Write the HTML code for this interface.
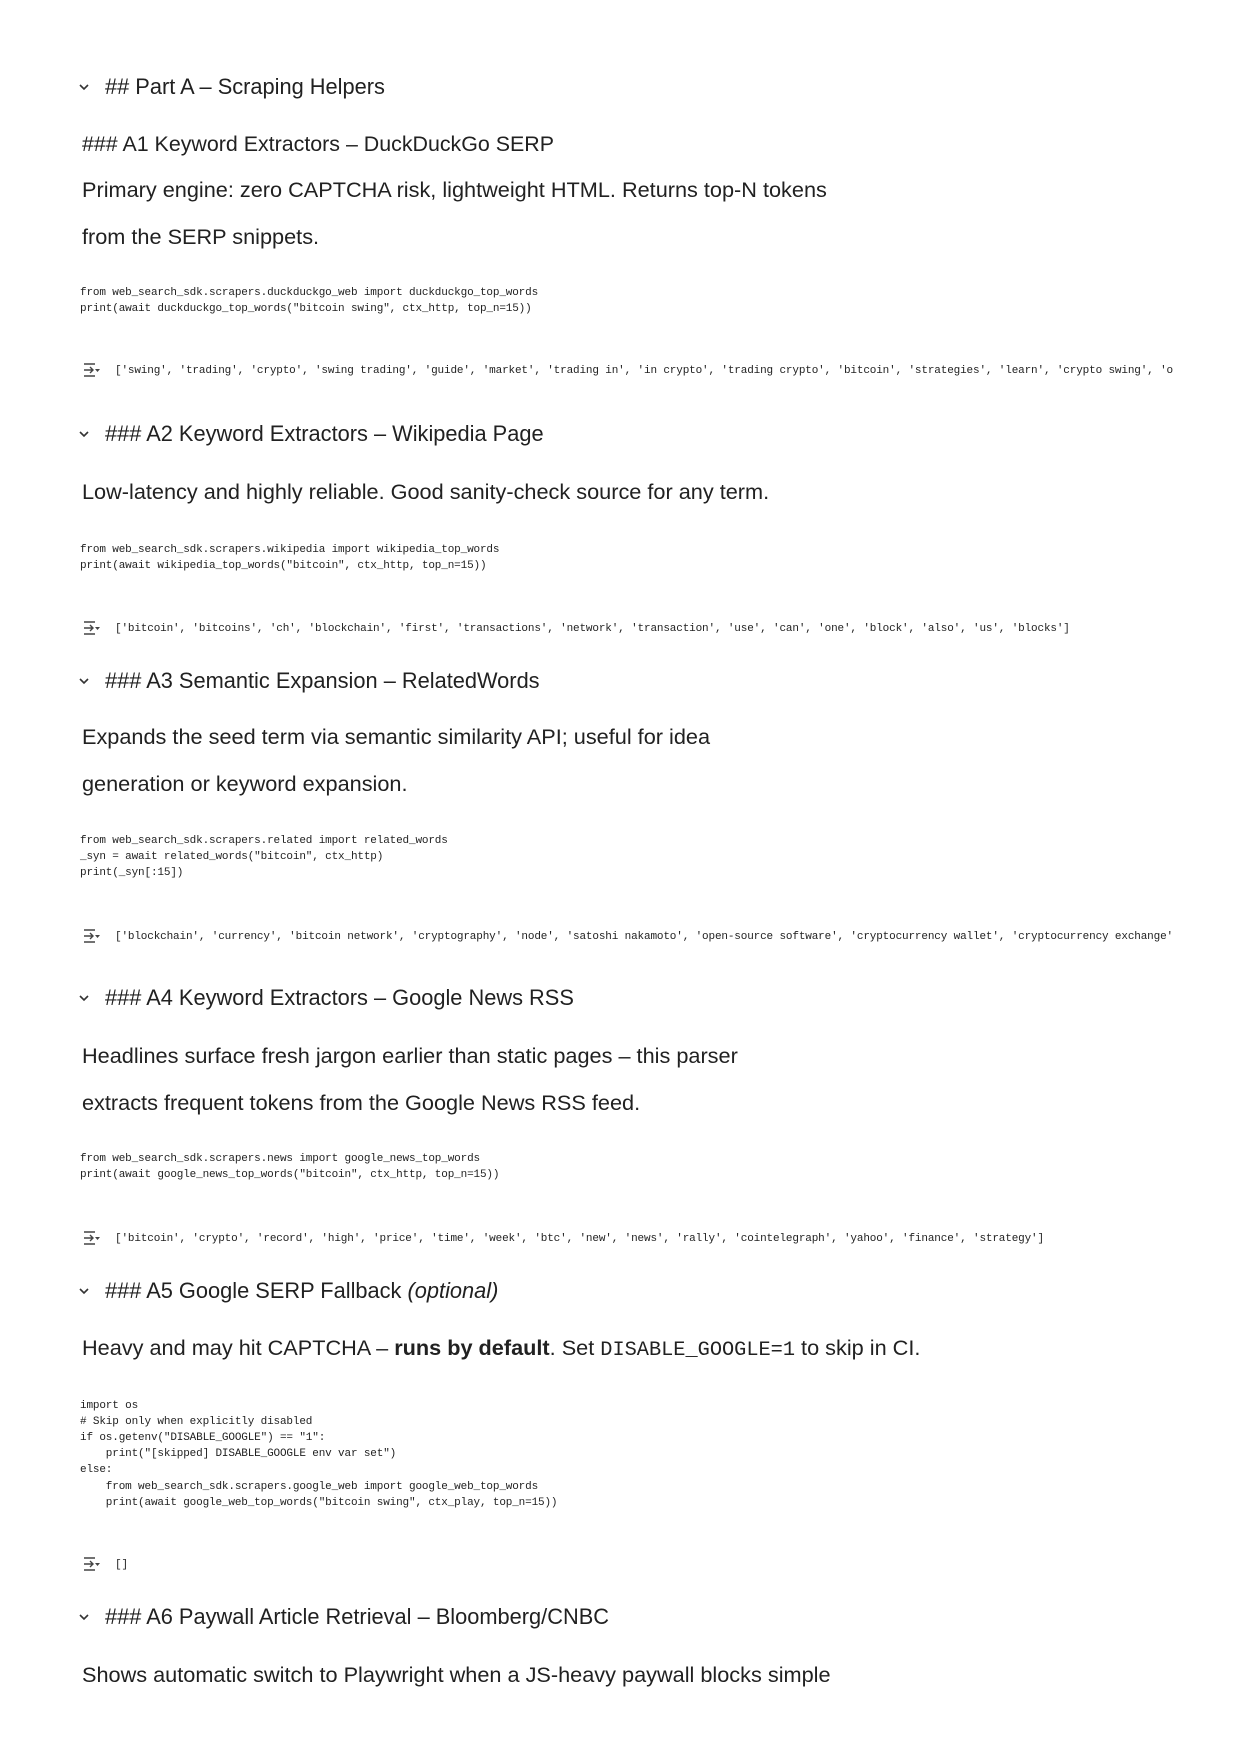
<!DOCTYPE html>
<html><head><meta charset="utf-8"><style>
body{margin:0;width:1241px;height:1755px;background:#fff;position:relative;overflow:hidden;color:#212121;font-family:"Liberation Sans",sans-serif}
.t{position:absolute;white-space:nowrap;line-height:30px;font-size:21.7px;left:82px}
.h{left:105px;font-size:21.8px}
.c{position:absolute;left:80px;font-family:"Liberation Mono",monospace;font-size:11px;letter-spacing:-0.15px;line-height:16.2px;white-space:pre;color:#222;margin-top:2px}
.o{position:absolute;left:115px;width:1067px;overflow:hidden;font-family:"Liberation Mono",monospace;font-size:11px;letter-spacing:-0.15px;line-height:16px;white-space:pre;color:#222;margin-top:2px}
.chev{position:absolute;left:78px;width:12px;height:8px}
.ic{position:absolute;left:83px;width:18px;height:14px;margin-top:1px}
code{font-family:"Liberation Mono",monospace;font-size:20.3px;letter-spacing:0}
</style></head><body>
<svg class="chev" style="top:82.5px" viewBox="0 0 12 8"><path d="M2 2l4 4 4-4" fill="none" stroke="#333" stroke-width="1.6"/></svg>
<div class="t h" style="top:71.5px">## Part A – Scraping Helpers</div>
<div class="t" style="top:128.5px;font-size:21.4px">### A1 Keyword Extractors – DuckDuckGo SERP</div>
<div class="t" style="top:175px">Primary engine: zero CAPTCHA risk, lightweight HTML. Returns top-N tokens</div>
<div class="t" style="top:221.5px">from the SERP snippets.</div>
<div class="c" style="top:283px">from web_search_sdk.scrapers.duckduckgo_web import duckduckgo_top_words
print(await duckduckgo_top_words("bitcoin swing", ctx_http, top_n=15))</div>
<svg class="ic" style="top:361.5px" viewBox="0 0 18 14"><path d="M1 1h11M1 13h11M1 7h9M7 4l3 3-3 3" fill="none" stroke="#444" stroke-width="1.4"/><path d="M12 6h5l-2.5 3z" fill="#444"/></svg>
<div class="o" style="top:360.5px">['swing', 'trading', 'crypto', 'swing trading', 'guide', 'market', 'trading in', 'in crypto', 'trading crypto', 'bitcoin', 'strategies', 'learn', 'crypto swing', 'o</div>

<svg class="chev" style="top:430px" viewBox="0 0 12 8"><path d="M2 2l4 4 4-4" fill="none" stroke="#333" stroke-width="1.6"/></svg>
<div class="t h" style="top:419px">### A2 Keyword Extractors – Wikipedia Page</div>
<div class="t" style="top:477px">Low-latency and highly reliable. Good sanity-check source for any term.</div>
<div class="c" style="top:540px">from web_search_sdk.scrapers.wikipedia import wikipedia_top_words
print(await wikipedia_top_words("bitcoin", ctx_http, top_n=15))</div>
<svg class="ic" style="top:620px" viewBox="0 0 18 14"><path d="M1 1h11M1 13h11M1 7h9M7 4l3 3-3 3" fill="none" stroke="#444" stroke-width="1.4"/><path d="M12 6h5l-2.5 3z" fill="#444"/></svg>
<div class="o" style="top:619px">['bitcoin', 'bitcoins', 'ch', 'blockchain', 'first', 'transactions', 'network', 'transaction', 'use', 'can', 'one', 'block', 'also', 'us', 'blocks']</div>

<svg class="chev" style="top:676.5px" viewBox="0 0 12 8"><path d="M2 2l4 4 4-4" fill="none" stroke="#333" stroke-width="1.6"/></svg>
<div class="t h" style="top:665.5px">### A3 Semantic Expansion – RelatedWords</div>
<div class="t" style="top:722px">Expands the seed term via semantic similarity API; useful for idea</div>
<div class="t" style="top:769px">generation or keyword expansion.</div>
<div class="c" style="top:831px">from web_search_sdk.scrapers.related import related_words
_syn = await related_words("bitcoin", ctx_http)
print(_syn[:15])</div>
<svg class="ic" style="top:928px" viewBox="0 0 18 14"><path d="M1 1h11M1 13h11M1 7h9M7 4l3 3-3 3" fill="none" stroke="#444" stroke-width="1.4"/><path d="M12 6h5l-2.5 3z" fill="#444"/></svg>
<div class="o" style="top:927px">['blockchain', 'currency', 'bitcoin network', 'cryptography', 'node', 'satoshi nakamoto', 'open-source software', 'cryptocurrency wallet', 'cryptocurrency exchange'</div>

<svg class="chev" style="top:994px" viewBox="0 0 12 8"><path d="M2 2l4 4 4-4" fill="none" stroke="#333" stroke-width="1.6"/></svg>
<div class="t h" style="top:983px">### A4 Keyword Extractors – Google News RSS</div>
<div class="t" style="top:1041px">Headlines surface fresh jargon earlier than static pages – this parser</div>
<div class="t" style="top:1087.5px">extracts frequent tokens from the Google News RSS feed.</div>
<div class="c" style="top:1149px">from web_search_sdk.scrapers.news import google_news_top_words
print(await google_news_top_words("bitcoin", ctx_http, top_n=15))</div>
<svg class="ic" style="top:1229.5px" viewBox="0 0 18 14"><path d="M1 1h11M1 13h11M1 7h9M7 4l3 3-3 3" fill="none" stroke="#444" stroke-width="1.4"/><path d="M12 6h5l-2.5 3z" fill="#444"/></svg>
<div class="o" style="top:1228.5px">['bitcoin', 'crypto', 'record', 'high', 'price', 'time', 'week', 'btc', 'new', 'news', 'rally', 'cointelegraph', 'yahoo', 'finance', 'strategy']</div>

<svg class="chev" style="top:1287px" viewBox="0 0 12 8"><path d="M2 2l4 4 4-4" fill="none" stroke="#333" stroke-width="1.6"/></svg>
<div class="t h" style="top:1276px">### A5 Google SERP Fallback <i>(optional)</i></div>
<div class="t" style="top:1333px">Heavy and may hit CAPTCHA – <b>runs by default</b>. Set <code>DISABLE_GOOGLE=1</code> to skip in CI.</div>
<div class="c" style="top:1395.5px">import os
# Skip only when explicitly disabled
if os.getenv("DISABLE_GOOGLE") == "1":
    print("[skipped] DISABLE_GOOGLE env var set")
else:
    from web_search_sdk.scrapers.google_web import google_web_top_words
    print(await google_web_top_words("bitcoin swing", ctx_play, top_n=15))</div>
<svg class="ic" style="top:1556px" viewBox="0 0 18 14"><path d="M1 1h11M1 13h11M1 7h9M7 4l3 3-3 3" fill="none" stroke="#444" stroke-width="1.4"/><path d="M12 6h5l-2.5 3z" fill="#444"/></svg>
<div class="o" style="top:1555px">[]</div>

<svg class="chev" style="top:1613px" viewBox="0 0 12 8"><path d="M2 2l4 4 4-4" fill="none" stroke="#333" stroke-width="1.6"/></svg>
<div class="t h" style="top:1602px">### A6 Paywall Article Retrieval – Bloomberg/CNBC</div>
<div class="t" style="top:1660px">Shows automatic switch to Playwright when a JS-heavy paywall blocks simple</div>
</body></html>
